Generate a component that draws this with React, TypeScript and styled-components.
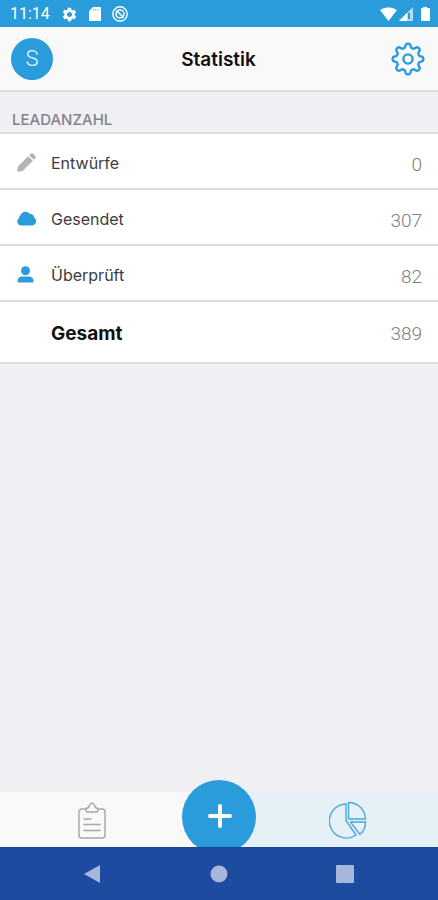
import React from "react";
import styled, { createGlobalStyle } from "styled-components";
import { MdSettings } from "react-icons/md";

const blue = "#2a9cdb";
const line = "#dcdcde";

const GlobalStyle = createGlobalStyle`
  *, *::before, *::after { box-sizing: border-box; }
  body { margin: 0; background: #efeff4; font-family: Inter, sans-serif; }
  button { border: 0; padding: 0; margin: 0; background: none; font: inherit; color: inherit; cursor: pointer; }
  svg { display: block; }
`;

const Screen = styled.div`
  display: flex;
  flex-direction: column;
  min-height: 100vh;
  overflow: hidden;
`;

const StatusBar = styled.div`
  display: flex;
  align-items: center;
  justify-content: space-between;
  height: 27px;
  padding: 1px 8px 0 10px;
  background: ${blue};
  color: #fff;
  font: 400 16px/26px Roboto, sans-serif;
`;

const StatusGroup = styled.div<{ $gap: number }>`
  display: flex;
  align-items: center;
  gap: ${(p) => p.$gap}px;
`;

const Header = styled.header`
  display: grid;
  grid-template-columns: 1fr auto 1fr;
  align-items: center;
  height: 65px;
  padding: 0 12px 0 11px;
  background: #f9f9f9;
  border-bottom: 2px solid ${line};
`;

const Avatar = styled.button`
  width: 42px;
  height: 42px;
  border-radius: 50%;
  && { background: ${blue}; color: #e6f4fb; font: 300 22px/42px Roboto, sans-serif; }
`;

const Title = styled.h1`
  margin: 0;
  padding-top: 2px;
  color: #111;
  font-size: 19px;
  font-weight: 600;
  line-height: 24px;
`;

const SettingsButton = styled.button`
  justify-self: end;
`;

const Main = styled.main`
  flex: 1;
`;

const SectionTitle = styled.h2`
  margin: 0;
  padding: 18px 12px 2px;
  color: #848488;
  font-size: 15px;
  font-weight: 500;
  line-height: 20px;
`;

const List = styled.dl`
  margin: 0;
  background: #fff;
  border-top: 2px solid ${line};
`;

const Row = styled.div<{ $total?: boolean }>`
  display: flex;
  align-items: center;
  height: ${(p) => (p.$total ? 62 : 56)}px;
  padding: 4px 16px 0 17px;
  border-bottom: 2px solid ${line};
`;

const RowIcon = styled.span<{ $color?: string }>`
  display: flex;
  width: 34px;
  padding-bottom: 2px;
  color: ${(p) => p.$color};
`;

const Label = styled.dt<{ $total?: boolean }>`
  flex: 1;
  color: ${(p) => (p.$total ? "#111" : "#3c3c3c")};
  font-size: ${(p) => (p.$total ? 19 : 16)}px;
  font-weight: ${(p) => (p.$total ? 700 : 400)};
  line-height: 24px;
`;

const Value = styled.dd<{ $total?: boolean }>`
  margin: 0;
  padding-top: ${(p) => (p.$total ? 0 : 4)}px;
  color: #7c7c80;
  font: 300 19px/24px Roboto, sans-serif;
`;

const TabBar = styled.nav`
  position: relative;
  display: grid;
  grid-template-columns: 1fr 1fr;
  height: 55px;
`;

const Tab = styled.button<{ $active?: boolean; $side: "left" | "right" }>`
  display: flex;
  align-items: center;
  justify-content: center;
  && {
    background: ${(p) => (p.$active ? "#e5f0f7" : "#f9f9f9")};
    padding: ${(p) => (p.$side === "left" ? "2px 36px 0 0" : "0 0 0 38px")};
  }
`;

const AddButton = styled.button`
  position: absolute;
  top: -12px;
  left: 50%;
  width: 74px;
  height: 74px;
  border-radius: 50%;
  transform: translateX(-50%);
  display: flex;
  align-items: center;
  justify-content: center;
  && { background: ${blue}; padding: 0 0 2px 2px; }
`;

const SystemNav = styled.nav`
  position: relative;
  display: flex;
  align-items: center;
  justify-content: center;
  gap: 102px;
  height: 53px;
  background: #1c4b9f;
  border-top: 1px solid #1a4390;
`;

const SystemButton = styled.button`
  display: flex;
  justify-content: center;
  width: 24px;
`;

const gearPath =
  Array.from({ length: 160 }, (_, i) => {
    const a = (i / 160) * Math.PI * 2;
    const r = 13.4 + 2 * Math.tanh(1.8 * Math.cos(8 * a));
    return `${i ? "L" : "M"}${(18 + r * Math.sin(a)).toFixed(2)} ${(18 - r * Math.cos(a)).toFixed(2)}`;
  }).join("") + "Z";

const PencilIcon = () => (
  <svg width="19" height="19" viewBox="0 0 19 19" fill="currentColor">
    <path d="M11.2 3.2L15.8 7.8L5.6 18L1.2 18.8Q0 19 .2 17.800L1 13.400Z" />
    <path d="M12.200 2.200L13.700.7Q15 -.3 16.300.8L18.200 2.700Q19.300 4 18.300 5.300L16.800 6.800Z" />
  </svg>
);

const CloudIcon = () => (
  <svg width="19" height="15" viewBox="0 0 19 15" fill="currentColor">
    <path d="M4 14.5A4 4 0 0 1 2 7.2Q2 5 3.6 4A5.5 5.5 0 0 1 13 3Q16.8 2.8 17 6.5A4.3 4.3 0 0 1 15 14.5Z" />
  </svg>
);

const UserIcon = () => (
  <svg width="17" height="17" viewBox="0 0 17 17" fill="currentColor">
    <circle cx="8.5" cy="4.7" r="4.5" />
    <path d="M1.5 16.5Q.5 16.5 .5 15.5Q.5 10.5 5.5 10.5H11.5Q16.5 10.5 16.5 15.5Q16.5 16.5 15.5 16.5Z" />
  </svg>
);

const rows = [
  { label: "Entwürfe", value: 0, icon: <PencilIcon />, color: "#b4b4b4" },
  { label: "Gesendet", value: 307, icon: <CloudIcon />, color: blue },
  { label: "Überprüft", value: 82, icon: <UserIcon />, color: blue },
];

export default function App() {
  return (
    <>
      <GlobalStyle />
      <Screen>
        <StatusBar>
          <StatusGroup $gap={11}>
            <span>11:14</span>
            <MdSettings size={17} />
            <svg width="12" height="14" viewBox="0 0 12 14" fill="currentColor">
              <path d="M4 0H11a1 1 0 0 1 1 1V13a1 1 0 0 1-1 1H1a1 1 0 0 1-1-1V4Z" />
              <path d="M4.5 2v1.5M6.7 2v1.5M8.9 2v1.5" stroke={blue} strokeWidth="0.8" />
            </svg>
            <svg width="16" height="16" viewBox="0 0 16 16" fill="none" stroke="currentColor">
              <circle cx="8" cy="8" r="7.2" strokeWidth="1.4" />
              <circle cx="8" cy="8" r="4" strokeWidth="1.5" />
              <path d="M4.5 4.5l7 7" strokeWidth="1.5" />
            </svg>
          </StatusGroup>
          <StatusGroup $gap={2}>
            <svg width="17" height="14" viewBox="0 0 17 14" fill="currentColor">
              <path d="M0 3Q8.5 -2.5 17 3L8.5 14Z" />
            </svg>
            <svg width="15" height="14" viewBox="0 0 15 14" fill="currentColor">
              <path d="M14 0V14H0Z" opacity="0.65" />
              <path d="M8 6V14H0Z" />
              <path d="M10 6v6" stroke={blue} strokeWidth="2" />
            </svg>
            <svg width="14" height="14" viewBox="0 0 14 14" fill="currentColor">
              <path d="M7 0h4v1h2a1 1 0 0 1 1 1V13a1 1 0 0 1-1 1H6a1 1 0 0 1-1-1V2a1 1 0 0 1 1-1h1Z" />
            </svg>
          </StatusGroup>
        </StatusBar>
        <Header>
          <Avatar aria-label="Profil">S</Avatar>
          <Title>Statistik</Title>
          <SettingsButton aria-label="Einstellungen">
            <svg width="36" height="36" viewBox="0 0 36 36" fill="none" stroke={blue} strokeWidth="2.4" strokeLinejoin="round">
              <path d={gearPath} />
              <circle cx="18" cy="18" r="4.6" />
            </svg>
          </SettingsButton>
        </Header>
        <Main>
          <SectionTitle>LEADANZAHL</SectionTitle>
          <List>
            {rows.map((r) => (
              <Row key={r.label}>
                <RowIcon $color={r.color}>{r.icon}</RowIcon>
                <Label>{r.label}</Label>
                <Value>{r.value}</Value>
              </Row>
            ))}
            <Row $total>
              <RowIcon />
              <Label $total>Gesamt</Label>
              <Value $total>389</Value>
            </Row>
          </List>
        </Main>
        <TabBar>
          <Tab $side="left" aria-label="Leads">
            <svg width="28" height="38" viewBox="0 0 28 38" fill="none" stroke="#a9a9a9" strokeWidth="1.5" strokeLinejoin="round" strokeLinecap="round">
              <path d="M8 7H4a3 3 0 0 0-3 3V33a3 3 0 0 0 3 3H24a3 3 0 0 0 3-3V10a3 3 0 0 0-3-3H20" />
              <path d="M8 6.5Q10.5 6.5 11.5 3.5Q14 -1.5 16.5 3.5Q17.5 6.5 20 6.5V8a2 2 0 0 1-2 2H10a2 2 0 0 1-2-2Z" />
              <path d="M6 17H13M6 22.5H22M6 28.5H22" />
            </svg>
          </Tab>
          <Tab $side="right" $active aria-label="Statistik">
            <svg width="38" height="38" viewBox="0 0 38 38" fill="none" stroke="#4ba9dc" strokeWidth="1.4" strokeLinejoin="round">
              <path d="M17 3A17 17 0 1 0 27 34L17 19.5Z" />
              <path d="M19.5 1.5A17 17 0 0 1 36.5 18H19.5Z" />
              <path d="M21.5 21H36.5A16 16 0 0 1 31 33.5Z" />
            </svg>
          </Tab>
          <AddButton aria-label="Hinzufügen">
            <svg width="26" height="26" viewBox="0 0 26 26" stroke="#fff" strokeWidth="4" strokeLinecap="round">
              <path d="M13 3V23M3 13H23" />
            </svg>
          </AddButton>
        </TabBar>
        <SystemNav>
          <SystemButton aria-label="Zurück">
            <svg width="18" height="20" viewBox="0 0 18 20" fill="#a6b7da"><path d="M0 10L16 1V19Z" /></svg>
          </SystemButton>
          <SystemButton aria-label="Start">
            <svg width="18" height="18" viewBox="0 0 18 18" fill="#a6b7da"><circle cx="9" cy="9" r="8.5" /></svg>
          </SystemButton>
          <SystemButton aria-label="Übersicht">
            <svg width="18" height="18" viewBox="0 0 18 18" fill="#a6b7da"><rect width="18" height="18" rx="1" /></svg>
          </SystemButton>
        </SystemNav>
      </Screen>
    </>
  );
}
